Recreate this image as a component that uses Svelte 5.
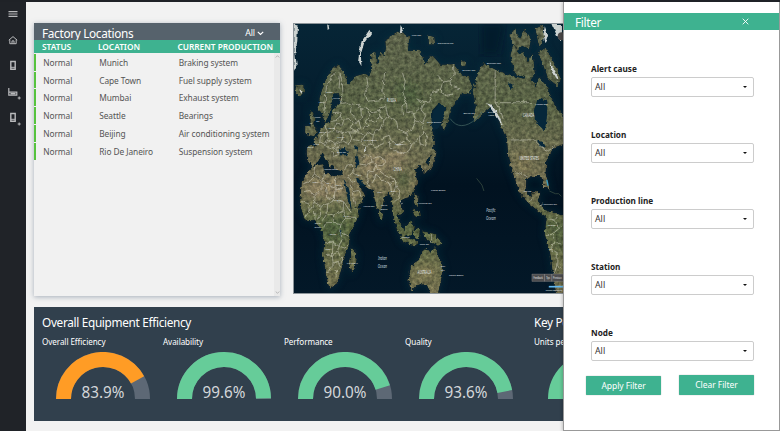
<script>
  const rows = [
    ['Munich', 'Braking system'],
    ['Cape Town', 'Fuel supply system'],
    ['Mumbai', 'Exhaust system'],
    ['Seattle', 'Bearings'],
    ['Beijing', 'Air conditioning system'],
    ['Rio De Janeiro', 'Suspension system']
  ];

  const arc = (deg) => {
    const a = ((180 - deg) * Math.PI) / 180;
    return `M7.5 47A39.5 39.5 0 0 1 ${47 + 39.5 * Math.cos(a)} ${47 - 39.5 * Math.sin(a)}`;
  };
  const gauges = [
    { name: 'Overall Efficiency', value: '83.9%', deg: 151, color: '#ff9c25' },
    { name: 'Availability', value: '99.6%', deg: 179, color: '#66cc99' },
    { name: 'Performance', value: '90.0%', deg: 163, color: '#66cc99' },
    { name: 'Quality', value: '93.6%', deg: 169, color: '#66cc99' }
  ];
  const filters = ['Alert cause', 'Location', 'Production line', 'Station', 'Node'];

  const land = [
    // Europe and Asia
    'M52 436L50 398L78 390L74 374L92 348L106 328L122 318L128 285L152 264L148 232L128 232L122 262L116 292L104 318L96 292L86 282L90 245L104 202L122 168L142 150L158 168L168 200L176 212L198 184L226 176L236 192L248 160L242 118L254 112L260 160L272 112L284 128L290 98L288 74L330 50L356 66L352 108L388 108L408 150L426 120L452 150L492 148L516 182L534 184L546 212L540 235L516 232L498 258L482 276L474 314L462 345L458 312L470 276L446 262L426 284L424 312L438 330L422 350L426 410L406 440L414 456L402 466L392 444L374 462L380 500L362 540L336 552L326 560L340 590L330 598L318 588L326 624L336 638L328 640L312 606L306 550L296 524L282 546L272 584L262 578L250 524L228 514L202 488L196 490L220 540L214 560L184 590L174 560L160 490L162 468L138 462L128 446L120 452L98 410L90 414L80 438L68 448Z',
    // Africa
    'M66 454L94 450L102 474L130 486L160 480L172 540L182 586L206 582L198 614L176 654L174 692L160 716L152 760L138 804L118 820L108 772L100 720L104 682L94 642L70 614L44 612L30 568L36 500L52 474Z',
    'M186 704L196 714L192 756L184 768L178 744Z',
    // North America
    'M556 300L562 272L552 226L570 170L582 146L618 164L660 182L688 188L734 200L740 220L752 190L772 214L784 246L806 286L822 300L826 384L792 396L770 438L768 478L780 520L768 514L758 480L726 482L710 492L708 526L722 548L738 530L752 536L744 558L758 576L770 592L788 590L826 608L826 835L804 835L796 784L786 710L770 658L776 606L752 588L720 562L696 536L672 470L660 430L656 372L636 330L624 290L606 270L590 284L572 300L556 316Z',
    // Arctic islands
    'M666 120L674 92L686 116L704 112L712 146L730 122L736 176L716 200L704 182L680 174Z',
    'M664 60L678 42L690 74L706 44L724 72L718 98L700 88L684 100Z',
    'M742 40L760 32L766 64L752 90ZM750 112L770 100L798 150L812 186L806 208L778 186L766 150Z',
    'M418 62L432 66L434 84L420 84ZM518 140L528 140L526 150L518 150Z',
    // British Isles, Iceland
    'M62 292L70 306L66 326L76 348L70 360L56 358L62 340ZM46 334L58 334L56 350L46 352ZM16 212L36 210L38 228L28 240L18 230Z',
    // Japan, Philippines, Indonesia
    'M426 350L432 380L428 398L424 370ZM428 400L438 412L428 446L418 464L408 470L422 444ZM376 540L384 544L382 572L374 566ZM370 584L386 590L388 604L376 604Z',
    'M316 610L336 640L348 658L340 666L322 640ZM346 640L364 620L370 632L364 660L350 658ZM334 666L380 680L378 690L340 680ZM372 650L388 644L386 670L376 668ZM402 652L430 658L456 684L446 690L414 674Z',
    // Australia
    'M366 752L388 738L398 712L410 702L424 718L436 700L444 726L456 752L454 788L444 835L424 835L410 806L384 808L366 826L358 796Z',
    'M270 590L278 600L274 612L268 604Z'
  ];

  const ice = [
    'M8 25L22 30L20 76L14 112L18 150L8 170Z',
    'M238 42L243 52L222 82L212 116L214 152L204 136L208 106L214 78Z',
    'M790 25L820 25L820 76L804 60ZM768 32L778 60L770 84L764 56ZM782 136L808 182L808 196L790 166ZM592 264L606 268L626 294L644 338L634 322L618 296L604 276Z',
    'M332 28L340 44L330 54ZM110 25L118 36L112 44ZM26 222L36 226L32 236ZM222 392L228 404L222 416Z'
  ];

  const water = [
    'M745 255L762 248L776 262L774 310L768 348L754 334L738 310L734 288Z',
    'M430 290L452 264L470 278L464 300L450 332L432 346L424 328Z',
    'M194 390L204 396L200 414L208 444L200 462L194 440L200 416Z',
    'M146 402L162 398L176 410L170 420L150 420Z',
    'M660 204L674 204L672 216L660 224ZM744 376L760 380L768 396L756 394Z',
    'M196 488L212 498L226 508L224 516L202 502ZM160 490L168 504L180 548L184 586L174 560Z',
    'M148 642L156 650L154 664L148 660Z'
  ];

  const borders = [
    // Nordic countries and Eastern Europe
    'M136 168L124 184L108 214L104 260L100 290M150 170L146 220M150 176L156 200L158 240L150 264L168 262L184 270L204 266L212 284L232 276L246 290L266 284L290 270',
    'M128 292L148 290L152 304L138 316L120 318M104 330L112 352L90 360M112 352L130 346L136 326L156 330L160 312L150 300M136 346L158 352L156 376L134 384L110 376L112 352M90 362L88 380L104 388L110 376M134 384L128 402L114 398L104 388M128 402L142 396L156 376L174 386L186 372L178 350L156 352M142 396L144 420L130 424L124 410',
    'M160 312L176 310L186 322L180 340L196 350L212 338L206 318L190 322M184 270L180 294L194 300L198 322M212 284L214 304L206 318M232 276L240 298L228 316L236 332L216 340M266 284L270 306L254 320L236 316M290 270L296 300L282 316L270 306M228 180L234 210L222 236L234 258L286 250L278 226L284 170',
    'M178 350L206 350L224 362L212 380L226 392L246 384L256 398L280 388L276 368L298 360L304 378L324 388L350 374L366 388L358 406L338 416L318 410L300 396L298 376M186 372L206 376L212 380M246 384L250 360L234 350L226 362M270 340L256 346L250 360M270 340L282 316',
    'M338 172L346 198L338 236L350 262L352 290L372 294L378 316L370 340L348 352L324 340L320 318L298 308M348 352L352 374M378 316L398 324L402 350L388 368L366 388M398 324L408 300L394 284L404 262L380 250M350 262L336 272L338 300M372 294L388 280',
    'M446 180L460 200L452 224L430 230L420 260L404 262M492 150L494 178L480 196L492 214L512 220M460 200L480 196M452 224L466 240L490 236M400 350L414 360L408 392L392 386L388 368',
    // Middle East, India and China
    'M162 466L170 450L186 448L188 470L172 488M188 470L204 482M180 510L190 530L208 526L216 546M186 532L196 568M172 488L184 500L196 492M208 446L226 450L246 440L260 452L250 470L234 466L230 494L240 516M246 440L242 422L224 418L214 432M260 452L272 470L290 484L316 492L302 504L288 500L272 490L258 478L250 486M258 478L246 506M302 504L304 530M250 430L270 424L286 436L280 450L260 452M316 492L318 512L330 528L326 550L338 570M318 512L308 540M326 552L316 562',
    // Africa
    'M76 452L72 476L54 500L38 506M72 476L96 500L94 518L74 542L54 526L40 530M102 476L98 496L110 508L134 520L136 486M134 520L158 520M134 520L132 556L112 548L108 516M74 542L72 562L92 574L112 566L132 556M32 560L54 566L56 590L72 562M56 590L44 606M72 590L74 614M92 574L90 600L82 612M112 566L110 596L96 616M110 596L130 600L158 590L160 560L132 556M158 590L166 610L196 610M160 560L180 590M130 600L128 622L106 624L98 642M128 622L152 626L166 610M152 626L148 650L156 672L146 694L128 682L104 684M156 654L176 664M146 694L164 700L174 690M128 682L126 720L102 722M126 720L142 712L146 694M142 712L154 726L152 746M126 720L128 748L114 770L108 770M128 748L144 742L150 760M128 772L142 764L140 786',
    // Canada, the United States and Latin America
    'M618 164L618 262L732 262M618 262L636 290L642 312M662 374L736 374L756 394L778 408L800 390M678 470L700 476L716 486M720 562L730 548M754 574L758 566M776 610L796 616L812 640L790 658L800 680L818 688M796 616L806 600M790 658L772 660M800 680L786 700M786 704L806 716L804 752L820 760M804 752L796 780M812 640L822 634M426 656L426 684'
  ];

  const small = [
    [380, 62, 'Kara Sea', 7], [62, 325, 'UK', 6], [82, 308, 'North', 6], [82, 319, 'Sea', 6],
    [242, 376, 'KAZAKHSTAN', 6], [332, 388, 'MONGOLIA', 6], [60, 398, 'Bay of', 6], [154, 412, 'Black Sea', 6],
    [122, 466, 'Mediterranean', 6], [118, 232, 'SWEDEN', 5], [95, 262, 'NORWAY', 5], [138, 252, 'FINLAND', 5],
    [98, 352, 'GERMANY', 5], [124, 342, 'POLAND', 5], [152, 368, 'UKRAINE', 5], [78, 388, 'FRANCE', 5],
    [468, 84, 'East Siberian Sea', 6], [538, 166, 'Chukchi Sea', 7], [614, 144, 'Beaufort Sea', 7], [540, 296, 'Bering Sea', 7],
    [606, 292, 'Gulf of', 6], [606, 303, 'Alaska', 6], [758, 270, 'Hudson Bay', 7], [434, 322, 'Sea of Okhotsk', 6],
    [236, 575, 'Arabian Sea', 6], [283, 574, 'Bay of', 6], [283, 585, 'Bengal', 6], [82, 627, 'Gulf of', 6], [82, 638, 'Guinea', 6],
    [406, 568, 'Philippine Sea', 6], [446, 527, 'Pacific Ocean', 7], [500, 784, 'Pacific Ocean', 7], [784, 570, 'Caribbean Sea', 6],
    [348, 668, 'Java Sea', 6], [404, 690, 'Timor Sea', 6], [460, 756, 'Coral', 5.5], [460, 768, 'Sea', 5.5],
    [76, 504, 'ALGERIA', 5], [116, 508, 'LIBYA', 5], [146, 514, 'EGYPT', 5], [150, 558, 'SUDAN', 5], [172, 606, 'ETHIOPIA', 5],
    [128, 660, 'CONGO', 5], [114, 706, 'ANGOLA', 5], [186, 748, 'MADAGASCAR', 5], [270, 534, 'INDIA', 6],
    [208, 482, 'IRAN', 6], [312, 532, 'BURMA', 5], [716, 532, 'MEXICO', 6], [790, 634, 'COLOMBIA', 5], [786, 706, 'PERU', 5]
  ];
</script>

<div class="app">
  <aside>
    <svg width="26" height="130" viewBox="0 0 26 130" fill="none" stroke="#b9babc" stroke-width="1">
      <path d="M8.5 11.6h9M8.5 14h9M8.5 16.4h9" stroke-width="1.1" />
      <path d="M8.8 40.2l4.2-3.6 4.2 3.6M9.8 39.7v4h6.4v-4M12 43.5v-2.6h2v2.6" />
      <path d="M10.8 61.5h4.4v7.8h-4.4z" stroke-width="1.4" /><path d="M11 67.3h4" />
      <path d="M8.8 88v7M8.8 92.2h8v3h-8zM10.5 93.6h5" stroke-width="1.2" /><path d="M17.7 98h3M19.2 96.5v3" />
      <path d="M10.8 113.5h4.4v7.8h-4.4z" stroke-width="1.4" /><path d="M11 119.3h4M17.7 124h3M19.2 122.5v3" />
    </svg>
  </aside>

  <main>
    <div class="top">
      <section class="locations">
        <header><h2>Factory Locations</h2><span class="all">All <svg width="7" height="5" viewBox="0 0 7 5"><path d="M.8.8l2.7 2.7L6.2.8" fill="none" stroke="#fff" stroke-width="1.2" /></svg></span></header>
        <div class="row head"><span>STATUS</span><span>LOCATION</span><span>CURRENT PRODUCTION</span></div>
        <div class="body">
          <div class="list">
            {#each rows as [city, product]}
              <div class="row"><span>Normal</span><span>{city}</span><span>{product}</span></div>
            {/each}
          </div>
          <div class="scroll">
            <svg width="5" height="3" viewBox="0 0 5 3"><path d="M.7 2.5l1.8-1.8 1.8 1.8" fill="none" stroke="#aaa" stroke-width=".8" /></svg>
            <svg width="5" height="3" viewBox="0 0 5 3"><path d="M.7.5l1.8 1.8L4.3.5" fill="none" stroke="#aaa" stroke-width=".8" /></svg>
          </div>
        </div>
      </section>

      <svg class="map" viewBox="10 25 816 810" preserveAspectRatio="none">
        <defs>
          <linearGradient id="climate" gradientUnits="userSpaceOnUse" x1="0" y1="25" x2="0" y2="835">
            <stop offset="0" stop-color="#5f654d" /><stop offset=".3" stop-color="#5a6446" />
            <stop offset=".45" stop-color="#696b4e" /><stop offset=".6" stop-color="#757052" />
            <stop offset=".75" stop-color="#5a6742" /><stop offset="1" stop-color="#777351" />
          </linearGradient>
          <linearGradient id="ocean" x1="0" y1="0" x2="0" y2="1">
            <stop offset="0" stop-color="#062536" /><stop offset=".35" stop-color="#041c2c" />
            <stop offset=".6" stop-color="#011220" /><stop offset="1" stop-color="#031828" />
          </linearGradient>
          <filter id="terrain" x="-5%" y="-5%" width="110%" height="110%" color-interpolation-filters="sRGB">
            <feTurbulence type="fractalNoise" baseFrequency=".09" numOctaves="4" seed="8" result="n" />
            <feDisplacementMap in="SourceGraphic" in2="n" scale="12" xChannelSelector="R" yChannelSelector="G" result="d" />
            <feColorMatrix in="n" type="matrix" values=".8 0 0 0 .1  .75 .05 0 0 .1  .75 0 .05 0 .1  0 0 0 0 1" result="c" />
            <feComposite in="d" in2="c" operator="arithmetic" k1="1.1" k2=".42" k3="0" k4="0" result="t" />
            <feComposite in="t" in2="d" operator="in" />
          </filter>
          <filter id="rough" x="-5%" y="-5%" width="110%" height="110%" color-interpolation-filters="sRGB">
            <feTurbulence type="fractalNoise" baseFrequency=".06" numOctaves="3" seed="4" />
            <feDisplacementMap in="SourceGraphic" scale="12" xChannelSelector="R" yChannelSelector="G" />
          </filter>
          <filter id="soft"><feGaussianBlur stdDeviation="11" /></filter>
        </defs>
        <rect x="10" y="25" width="816" height="810" fill="url(#ocean)" />
        <g fill="#0b3140" stroke="#0b3140" stroke-width="16" opacity=".45" filter="url(#soft)">
          {#each land as d}<path {d} />{/each}
        </g>
        <path d="M576 25h70l-18 90h-50z" fill="#011426" opacity=".6" filter="url(#soft)" />
        <g filter="url(#terrain)">
          <g fill="url(#climate)" stroke="url(#climate)" stroke-width="5">{#each land as d}<path {d} />{/each}</g>
          <g filter="url(#soft)">
            <path d="M54 500L156 496L162 546L50 552ZM180 510L206 540L184 564ZM214 410L270 420L300 410L356 396L340 450L260 472L218 480Z" fill="#948665" opacity=".65" />
            <path d="M90 620L160 610L160 680L110 680ZM330 460L364 480L350 530L320 510ZM796 630L820 630V720L806 700ZM320 200L380 210L390 270L330 260Z" fill="#405a36" opacity=".5" />
            <path d="M378 758L440 750L430 790L382 792ZM676 410L716 410L724 470L690 470Z" fill="#8b7f57" opacity=".5" />
          </g>
        </g>
        <g fill="#ccd2d0" filter="url(#rough)">{#each ice as d}<path {d} />{/each}</g>
        <g fill="#06273a" filter="url(#rough)">{#each water as d}<path {d} />{/each}</g>
        <g fill="none" stroke="#dddccc" stroke-width="2.4" opacity=".62" filter="url(#rough)">{#each borders as d}<path {d} />{/each}</g>
        <path d="M482 310Q512 352 562 310L578 290" fill="none" stroke="#3c5c5b" stroke-width="2.5" />
        <path d="M782 528l18 8h10l8 8M562 490l16 20 6 18" fill="none" stroke="#34483f" stroke-width="2.5" />
        <path d="M774 494l4 18" stroke="#3a9abf" stroke-width="4" />
        <g class="labels">
          {#each small as [x, y, label, size]}<text {x} {y} font-size={size}>{label}</text>{/each}
          <text x="305" y="259" font-size="14" textLength="27" lengthAdjust="spacingAndGlyphs">RUSSIA</text>
          <text x="324" y="467" font-size="14" textLength="25" lengthAdjust="spacingAndGlyphs">CHINA</text>
          <text x="719" y="305" font-size="15" textLength="34" lengthAdjust="spacingAndGlyphs">CANADA</text>
          <text x="721" y="435" font-size="15" textLength="58" lengthAdjust="spacingAndGlyphs">UNITED STATES</text>
          <text x="405" y="777" font-size="15" textLength="42" lengthAdjust="spacingAndGlyphs">AUSTRALIA</text>
          <g class="ocean-name" font-size="17">
            <text x="277" y="736" textLength="27" lengthAdjust="spacingAndGlyphs">Indian</text><text x="277" y="760" textLength="28" lengthAdjust="spacingAndGlyphs">Ocean</text>
            <text x="605" y="592" textLength="28" lengthAdjust="spacingAndGlyphs">Pacific</text><text x="605" y="616" textLength="29" lengthAdjust="spacingAndGlyphs">Ocean</text>
          </g>
        </g>
        <g stroke="#999" fill="#4d4d4f"><path d="M729 778h38v22h-38zM767 778h22v22h-22zM789 778h38v22h-38z" /></g>
        <g class="labels" font-size="8">
          <text x="748" y="792" textLength="28" lengthAdjust="spacingAndGlyphs">Feedback</text><text x="778" y="792" textLength="12" lengthAdjust="spacingAndGlyphs">Tips</text><text x="806" y="792" textLength="26" lengthAdjust="spacingAndGlyphs">Previous</text>
          <text x="796" y="829" font-size="6" textLength="50" lengthAdjust="spacingAndGlyphs">Earthstar Geographics</text>
        </g>
        <path d="M780 816h46" stroke="#64b8ee" stroke-width="5" />
        <circle cx="819" cy="62" r="12" fill="#4b4848" />
      </svg>
    </div>

    <section class="metrics">
      <div class="oee">
        <h2>Overall Equipment Efficiency</h2>
        <div class="gauges">
          {#each gauges as g}
            <div class="gauge">
              <h3>{g.name}</h3>
              <svg width="94" height="55" viewBox="0 0 94 55" fill="none" stroke-width="15">
                <path d={arc(180)} stroke="#5d6875" /><path d={arc(g.deg)} stroke={g.color} />
                <text x="47" y="45.8" textLength="43" lengthAdjust="spacingAndGlyphs">{g.value}</text>
              </svg>
            </div>
          {/each}
        </div>
      </div>
      <div class="kpi">
        <h2>Key Performance</h2>
        <div class="gauge"><h3>Units per hour</h3><svg width="94" height="55" viewBox="0 0 94 55" fill="none" stroke-width="15"><path d={arc(180)} stroke="#66cc99" /></svg></div>
      </div>
    </section>
  </main>

  <div class="filter">
    <header><h2>Filter</h2><svg width="7" height="7" viewBox="0 0 7 7"><path d="M.7.7l5.6 5.6M6.3.7L.7 6.3" stroke="#fff" stroke-width=".9" /></svg></header>
    <form>
      {#each filters as name}
        <div class="field">
          <b>{name}</b>
          <div class="select">All<i></i></div>
        </div>
      {/each}
      <div class="actions"><button type="button">Apply Filter</button><button type="button">Clear Filter</button></div>
    </form>
  </div>
</div>

<style>
  :global(body) { margin: 0; }
  * { box-sizing: border-box; }
  .app { position: relative; display: flex; width: 780px; height: 431px; overflow: hidden; background: #f2f2f2; border-top: 2px solid #1f2227; font-family: 'Noto Sans', 'Open Sans', sans-serif; }
  h2, h3 { margin: 0; font-weight: 400; white-space: nowrap; }
  h2 { font-size: 11.8px; letter-spacing: -.32px; line-height: 16px; }
  aside { flex: none; width: 26px; background: #202328; }
  aside svg { display: block; margin-top: -2px; }
  main { flex: none; width: 800px; padding: 21px 0 0 8px; }
  .top { display: flex; gap: 13px; height: 284px; }
  .locations { width: 246px; height: 273px; background: #f1f1f1; box-shadow: 0 1px 5px #8390a0b0; display: flex; flex-direction: column; }
  .locations header { display: flex; justify-content: space-between; height: 17px; padding: 2px 16px 0 8px; background: #56626c; color: #fff; }
  .all { display: flex; align-items: center; gap: 2px; font-size: 8.8px; letter-spacing: -.1px; line-height: 15px; padding-top: 2px; }
  .row { display: grid; grid-template-columns: 56px 79.5px 1fr; white-space: nowrap; }
  .row span { letter-spacing: -.07px; }
  .head { height: 12.5px; padding-left: 8px; background: #3eb290; color: #fff; font-size: 8.3px; font-weight: 600; line-height: 14px; }
  .head span { letter-spacing: -.01px; }
  .body { display: flex; flex: 1; }
  .list { width: 240px; padding-top: 1.3px; }
  .list .row { height: 16.8px; margin-bottom: 1px; padding-left: 7.2px; border-left: 2px solid #56c33d; color: #555; font-size: 8.35px; line-height: 18px; }
  .scroll { display: flex; flex-direction: column; align-items: center; justify-content: space-between; width: 6px; padding: 2px 0; background: #e9e9e9; }
  .map { flex: none; width: 272px; height: 271px; border: 1px solid #8c9499; }
  .labels { fill: #e7ebed; font-family: 'Noto Sans', sans-serif; text-anchor: middle; }
  .ocean-name { font-style: italic; fill: #c1d4df; }
  .metrics { display: flex; width: 780px; height: 114px; padding: 7px 0 0 8px; background: #31404d; color: #fff; }
  .oee { width: 492px; }
  .gauges { display: flex; }
  .gauge { width: 121px; padding-top: 5px; }
  .gauge h3 { font-size: 8.1px; letter-spacing: -.07px; line-height: 14px; }
  .gauge svg { display: block; margin: 2.5px 0 0 14px; }
  .gauge text { fill: #d4d7da; font-size: 16px; text-anchor: middle; stroke: none; }
  .filter { position: absolute; top: 0; right: 0; width: 217px; height: 429px; background: #fff; border: 1px solid #999; border-top: 0; box-shadow: -1px 0 3px #0003; }
  .filter header { display: flex; justify-content: space-between; align-items: center; height: 16.5px; margin-top: 11.3px; padding: 0 30px 0 11px; background: #3eb290; color: #fff; }
  form { padding: 31.2px 25px 0 27px; }
  .field { height: 66px; }
  .field b { display: block; font-size: 8.2px; line-height: 14px; color: #222; padding-top: 1px; }
  .select { display: flex; justify-content: space-between; align-items: center; height: 20px; margin-top: 1.2px; padding: 0 6px 0 3px; border: 1px solid #ccc; border-radius: 2px; font-size: 8.8px; color: #333; }
  .select i { border: 2.5px solid transparent; border-top-color: #111; border-bottom: 0; }
  .actions { display: flex; justify-content: space-between; margin: -15.2px 0 0 -5px; }
  button { width: 75px; height: 19.5px; padding: 0; border: 0; border-radius: 1px; background: #3eb290; color: #fff; font: 8.5px 'Noto Sans', sans-serif; letter-spacing: -.05px; box-shadow: 0 0 1px #777; }
  button + button { position: relative; top: -.6px; }
</style>
